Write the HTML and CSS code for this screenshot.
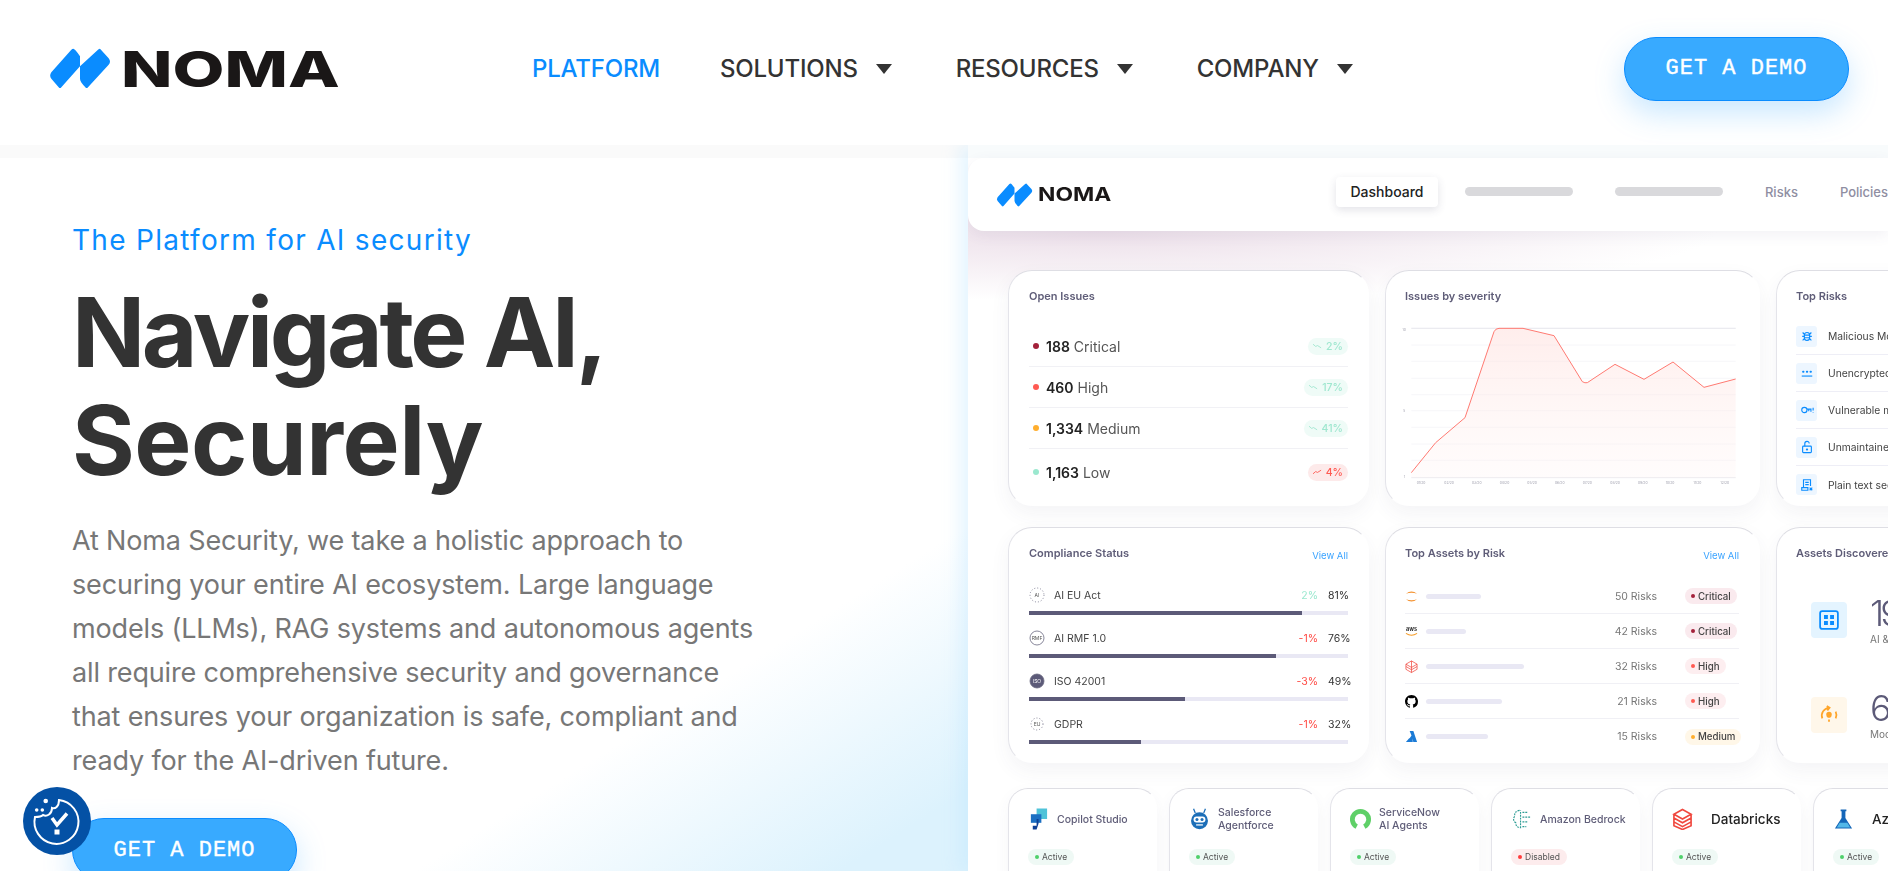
FILE: index.html
```html
<!DOCTYPE html>
<html lang="en">
<head>
  <meta charset="UTF-8">
  <title>Noma Security - The Platform for AI security</title>
  <link rel="stylesheet" href="styles.css">
</head>
<body>

  <header class="site-header">
    <a class="logo" href="#">
      <svg class="logo-mark" viewBox="55 58 186 122"><path d="M128 60Q132 60 148 82V112L92 175Q88 180 84 175L62 150Q55 140 62 130L122 63Q125 60 128 60Z"/><path d="M208 60L234 88Q242 98 234 108L172 175Q168 180 164 175Q148 160 148 150V112L202 63Q205 60 208 60Z"/></svg>
      <span class="logo-text">NOMA</span>
    </a>
    <nav class="main-nav">
      <a class="nav-link active" href="#">PLATFORM</a>
      <a class="nav-link has-arrow" href="#">SOLUTIONS</a>
      <a class="nav-link has-arrow" href="#">RESOURCES</a>
      <a class="nav-link has-arrow" href="#">COMPANY</a>
    </nav>
    <a class="btn-demo header-btn" href="#">GET A DEMO</a>
  </header>

  <section class="hero">
    <div class="hero-copy">
      <p class="eyebrow">The Platform for AI security</p>
      <h1>Navigate AI,<br><span class="second-line">Securely</span></h1>
      <p class="lead">At Noma Security, we take a holistic approach to securing your entire AI ecosystem. Large language models (LLMs), RAG systems and autonomous agents all require comprehensive security and governance that ensures your organization is safe, compliant and ready for the AI-driven future.</p>
      <a class="btn-demo" href="#">GET A DEMO</a>
    </div>

    <div class="dash">
      <div class="dash-bar">
        <svg class="dash-mark" viewBox="55 58 186 122"><path d="M128 60Q132 60 148 82V112L92 175Q88 180 84 175L62 150Q55 140 62 130L122 63Q125 60 128 60Z"/><path d="M208 60L234 88Q242 98 234 108L172 175Q168 180 164 175Q148 160 148 150V112L202 63Q205 60 208 60Z"/></svg>
        <span class="dash-logo">NOMA</span>
        <span class="dash-tab">Dashboard</span>
        <span class="dash-pill first"></span>
        <span class="dash-pill"></span>
        <span class="dash-item first">Risks</span>
        <span class="dash-item">Policies</span>
      </div>

      <div class="card-row row-one">
        <div class="card col-a">
          <h3>Open Issues</h3>
          <ul class="issues">
            <li><i class="dot critical"></i><b>188</b> Critical<span class="trend"><svg viewBox="0 0 10 6"><path d="M0 1L3 3.5L5 2.5L9 5"/></svg>2%</span></li>
            <li><i class="dot high"></i><b>460</b> High<span class="trend"><svg viewBox="0 0 10 6"><path d="M0 1L3 3.5L5 2.5L9 5"/></svg>17%</span></li>
            <li><i class="dot medium"></i><b>1,334</b> Medium<span class="trend"><svg viewBox="0 0 10 6"><path d="M0 1L3 3.5L5 2.5L9 5"/></svg>41%</span></li>
            <li><i class="dot low"></i><b>1,163</b> Low<span class="trend up"><svg viewBox="0 0 10 6"><path d="M0 5L3 2.5L5 3.5L9 1"/></svg>4%</span></li>
          </ul>
        </div>

        <div class="card col-b">
          <h3>Issues by severity</h3>
          <svg class="chart" viewBox="60 195 1020 495">
            <defs>
              <linearGradient id="area" x1="0" y1="0" x2="0" y2="1">
                <stop offset="0" stop-color="#ffdcd9" stop-opacity=".5"/>
                <stop offset="1" stop-color="#fff3f2" stop-opacity=".25"/>
              </linearGradient>
            </defs>
            <g class="grid">
              <path d="M97 205H1070M97 255H1070M97 304H1070M97 355H1070M97 404H1070M97 452H1070M97 502H1070M97 552H1070M97 601H1070"/>
              <path class="base" d="M97 205H1070M97 653H1070"/>
            </g>
            <path fill="url(#area)" d="M97 638L170 548L258 473L345 215Q350 205 360 205H432L525 227L610 365Q618 370 625 368L708 313L795 358L882 306L975 382L1070 357V653H97Z"/>
            <path class="line" d="M97 638L170 548L258 473L345 215Q350 205 360 205H432L525 227L610 365Q618 370 625 368L708 313L795 358L882 306L975 382L1070 357"/>
            <g class="ticks">
              <text x="70" y="212">10</text><text x="73" y="455">5</text><text x="74" y="653">1</text>
              <text x="113" y="672">01/20</text><text x="196" y="672">02/20</text><text x="279" y="672">03/20</text><text x="362" y="672">04/20</text><text x="445" y="672">05/20</text><text x="528" y="672">06/20</text><text x="611" y="672">07/20</text><text x="694" y="672">08/20</text><text x="777" y="672">09/20</text><text x="860" y="672">10/20</text><text x="943" y="672">11/20</text><text x="1024" y="672">12/20</text>
            </g>
          </svg>
        </div>

        <div class="card col-c">
          <h3>Top Risks</h3>
          <ul class="risks">
            <li><span class="tile"><svg viewBox="0 0 16 16"><rect x="5" y="4" width="6" height="9" rx="3"/><path d="M5 7H11M5 10H11M3 4L5 6M13 4L11 6M3 13L5 11M13 13L11 11M2.500 8.500H5M11 8.500H13.500"/></svg></span>Malicious Models</li>
            <li><span class="tile"><svg viewBox="0 0 16 16"><path d="M2 11.500H14"/><path class="fat" d="M3.500 6.500H4M7.800 6.500H8.300M12 6.500H12.500"/></svg></span>Unencrypted data</li>
            <li><span class="tile"><svg viewBox="0 0 16 16"><circle cx="5" cy="8" r="3"/><path d="M8 7H12.500V10M10 7V9.500M15 5.500V8.500M15 10.500V11"/></svg></span>Vulnerable models</li>
            <li><span class="tile"><svg viewBox="0 0 16 16"><rect x="3" y="7" width="10" height="7.500" rx="1"/><path d="M5.500 7V4A2.500 2.500 0 0 1 10.500 4"/><path class="fat" d="M7.800 10.800H8.200"/></svg></span>Unmaintained code</li>
            <li><span class="tile"><svg viewBox="0 0 16 16"><path d="M4 11V2H12V9M6 5H10M6 7.500H10M2 11H9V14H2ZM11 11L14 14M14 11L11 14"/></svg></span>Plain text secrets</li>
          </ul>
        </div>
      </div>

      <div class="card-row row-two">
        <div class="card col-a">
          <div class="card-head"><h3>Compliance Status</h3><a href="#">View All</a></div>
          <ul class="compliance">
            <li>
              <div class="comp-line"><svg class="comp-icon" viewBox="0 0 16 16"><circle class="dashed" cx="8" cy="8" r="7"/><text x="8" y="10">AI</text></svg><span class="comp-name">AI EU Act</span><span class="delta good">2%</span><span class="pct">81%</span></div>
              <div class="bar"><div class="bar-fill" style="width: 85.6%"></div></div>
            </li>
            <li>
              <div class="comp-line"><svg class="comp-icon" viewBox="0 0 16 16"><circle cx="8" cy="8" r="7"/><text x="8" y="10">RMF</text></svg><span class="comp-name">AI RMF 1.0</span><span class="delta bad">-1%</span><span class="pct">76%</span></div>
              <div class="bar"><div class="bar-fill" style="width: 77.5%"></div></div>
            </li>
            <li>
              <div class="comp-line"><svg class="comp-icon" viewBox="0 0 16 16"><circle class="solid" cx="8" cy="8" r="7"/><text class="light" x="8" y="10">ISO</text></svg><span class="comp-name">ISO 42001</span><span class="delta bad">-3%</span><span class="pct">49%</span></div>
              <div class="bar"><div class="bar-fill" style="width: 49%"></div></div>
            </li>
            <li>
              <div class="comp-line"><svg class="comp-icon" viewBox="0 0 16 16"><circle class="dashed" cx="8" cy="8" r="6"/><text x="8" y="10">EU</text></svg><span class="comp-name">GDPR</span><span class="delta bad">-1%</span><span class="pct">32%</span></div>
              <div class="bar"><div class="bar-fill" style="width: 35%"></div></div>
            </li>
          </ul>
        </div>

        <div class="card col-b">
          <div class="card-head"><h3>Top Assets by Risk</h3><a href="#">View All</a></div>
          <ul class="assets">
            <li><svg class="asset-icon" viewBox="0 0 14 16"><path class="jup" d="M1 5Q7 0 13 5Q7 3 1 5ZM1 11Q7 16 13 11Q7 13 1 11Z"/></svg><span class="ghost" style="width: 55px"></span><span class="risk-count">50 Risks</span><span class="sev-col"><span class="sev sev-critical"><i class="dot critical"></i>Critical</span></span></li>
            <li><svg class="asset-icon" viewBox="0 0 14 16"><text class="aws" x="7" y="8">aws</text><path class="smile" d="M1 10Q7 14 13 10"/></svg><span class="ghost" style="width: 40px"></span><span class="risk-count">42 Risks</span><span class="sev-col"><span class="sev sev-critical"><i class="dot critical"></i>Critical</span></span></li>
            <li><svg class="asset-icon" viewBox="0 0 14 16"><path class="stack" d="M7 2L13 5.500V11L7 14.500L1 11V5.500ZM1 5.500L7 9L13 5.500M1 8L7 11.500L13 8M7 2V14.500"/></svg><span class="ghost" style="width: 98px"></span><span class="risk-count">32 Risks</span><span class="sev-col"><span class="sev sev-high"><i class="dot high"></i>High</span></span></li>
            <li><svg class="asset-icon" viewBox="0 0 16 16"><path d="M8 0C3.58 0 0 3.58 0 8c0 3.54 2.29 6.53 5.47 7.59.4.07.55-.17.55-.38 0-.19-.01-.82-.01-1.49-2.01.37-2.53-.49-2.69-.94-.09-.23-.48-.94-.82-1.13-.28-.15-.68-.52-.01-.53.63-.01 1.08.58 1.23.82.72 1.21 1.87.87 2.33.66.07-.52.28-.87.51-1.07-1.78-.2-3.64-.89-3.64-3.95 0-.87.31-1.59.82-2.15-.08-.2-.36-1.02.08-2.12 0 0 .67-.21 2.2.82.64-.18 1.32-.27 2-.27.68 0 1.36.09 2 .27 1.53-1.04 2.2-.82 2.2-.82.44 1.1.16 1.92.08 2.12.51.56.82 1.27.82 2.15 0 3.07-1.87 3.75-3.65 3.95.29.25.54.73.54 1.48 0 1.07-.01 1.93-.01 2.2 0 .21.15.46.55.38A8.013 8.013 0 0016 8c0-4.42-3.58-8-8-8z"/></svg><span class="ghost" style="width: 76px"></span><span class="risk-count">21 Risks</span><span class="sev-col"><span class="sev sev-high"><i class="dot high"></i>High</span></span></li>
            <li><svg class="asset-icon" viewBox="0 0 14 16"><path class="azure" d="M5 2H9L13 14H9L7.500 10H5L7 7ZM4.500 10H7.500L8.500 14H1Z"/></svg><span class="ghost" style="width: 62px"></span><span class="risk-count">15 Risks</span><span class="sev-col"><span class="sev sev-medium"><i class="dot medium"></i>Medium</span></span></li>
          </ul>
        </div>

        <div class="card col-c">
          <h3>Assets Discovered</h3>
          <div class="found first">
            <span class="found-tile blue"><svg viewBox="0 0 18 18"><rect x="1" y="1" width="16" height="16" rx="2"/><path class="squares" d="M4.500 4.500H8V8H4.500ZM10 4.500H13.500V8H10ZM4.500 10H8V13.500H4.500ZM10 10H13.500V13.500H10Z"/></svg></span>
            <div><div class="found-num">19</div><div class="found-sub">AI &amp; ML</div></div>
          </div>
          <div class="found">
            <span class="found-tile amber"><svg viewBox="0 0 18 18"><path d="M3 12A7 7 0 0 1 9 2.500M15 6A7 7 0 0 1 15 12M7 1L9.500 2.500L7.500 5"/><path class="bulb" d="M6.500 8.500A2.500 2.500 0 0 1 11.500 8.500Q11.500 10.500 10 11.500H8Q6.500 10.500 6.500 8.500ZM8.200 13H9.800V15H8.200Z"/></svg></span>
            <div><div class="found-num">64</div><div class="found-sub">Models</div></div>
          </div>
        </div>
      </div>

      <div class="card-row row-three">
        <div class="agent">
          <div class="agent-head"><svg class="agent-icon" viewBox="0 0 22 22"><path fill="#4fc3d9" d="M9 0H20V11H9Z"/><path fill="#1b6fc2" d="M3 6H14V15H3Z"/><path fill="#0d3f94" d="M0 11H9V18H5V22H9L11 16V11Z"/></svg><span>Copilot Studio</span></div>
          <span class="status on"><i></i>Active</span>
        </div>
        <div class="agent">
          <div class="agent-head"><svg class="agent-icon" viewBox="0 0 22 26"><path d="M6 6L4 1M16 6L18 1" stroke="#1d6fb8" stroke-width="1.500"/><circle cx="11" cy="15" r="10" fill="#1d6fb8"/><rect x="4" y="10" width="14" height="7" rx="3.500" fill="#fff"/><circle cx="8" cy="13.500" r="1.800" fill="#1d6fb8"/><circle cx="14" cy="13.500" r="1.800" fill="#1d6fb8"/><path d="M7 20H15" stroke="#fff" stroke-width="1.500"/></svg><span>Salesforce<br>Agentforce</span></div>
          <span class="status on"><i></i>Active</span>
        </div>
        <div class="agent">
          <div class="agent-head"><svg class="agent-icon" viewBox="0 0 22 22"><path fill="none" stroke="#5fd068" stroke-width="5" d="M7 19A8.500 8.500 0 1 1 15 19"/></svg><span>ServiceNow<br>AI Agents</span></div>
          <span class="status on"><i></i>Active</span>
        </div>
        <div class="agent">
          <div class="agent-head"><svg class="agent-icon" viewBox="0 0 22 22"><g fill="none" stroke="#2c9c94" stroke-width="1.200" stroke-dasharray="2 1"><path d="M9 2Q3 3 4 8Q1 12 5 15Q5 20 10 20V2M12 4H18M12 9H20M12 14H17M12 19H16"/></g></svg><span>Amazon Bedrock</span></div>
          <span class="status off"><i></i>Disabled</span>
        </div>
        <div class="agent lift">
          <div class="agent-head big"><svg class="agent-icon" viewBox="0 0 22 22"><path fill="none" stroke="#f0483e" stroke-width="1.700" d="M11 1L20 6L11 11L2 6ZM2 10L11 15L20 10M2 14L11 19L20 14M2 6V18L11 22L20 18V6"/></svg><span>Databricks</span></div>
          <span class="status on"><i></i>Active</span>
        </div>
        <div class="agent lift">
          <div class="agent-head big"><svg class="agent-icon" viewBox="0 0 22 22"><path fill="#1466b8" d="M8 1H14V3H13V10L20 21H2L9 10V3H8Z"/><path fill="#52b7e8" d="M7 15H15L18 20H4Z"/></svg><span>Azure AI Foundry</span></div>
          <span class="status on"><i></i>Active</span>
        </div>
      </div>
    </div>
  </section>

  <!-- cookie settings badge sits over the page -->
  <button class="cookie-badge" aria-label="Cookie settings">
    <svg viewBox="0 0 68 68">
      <path class="cookie" d="M12 30A22 22 0 1 0 36 13C36 20 32 22 29 21C29 27 24 30 20 28C18 30 15 30 12 30Z"/>
      <circle cx="22.700" cy="14" r="2.300"/><circle cx="19.300" cy="23" r="1.800"/><circle cx="13.700" cy="23" r="1.800"/>
      <path class="check" d="M29 31L34 38L44 26.500"/>
      <rect x="31.500" y="42.500" width="5" height="5"/>
    </svg>
  </button>

</body>
</html>
```

FILE: styles.css
```css
* {
  box-sizing: border-box;
}

html, body {
  height: 871px;
  overflow: hidden;
}

body {
  margin: 0;
  font-family: "Inter", "Noto Sans", sans-serif;
  color: #333;
  background: #fff;
}

a {
  color: inherit;
  text-decoration: none;
}

ul {
  list-style: none;
  margin: 0;
  padding: 0;
}

/* header */
.site-header {
  display: flex;
  align-items: center;
  height: 145px;
  padding: 0 39px 8px 49px;
  background: #fff;
}

.logo {
  display: flex;
  align-items: center;
  width: 288px;
}

.logo-mark {
  width: 62px;
  height: 41px;
  fill: #0a8cff;
  flex: none;
}

.logo-text {
  margin-left: 10px;
  font-size: 50px;
  line-height: 50px;
  font-weight: 800;
  color: #1a1717;
  transform: scaleX(1.345);
  transform-origin: left center;
}

.main-nav {
  display: flex;
  align-items: center;
  margin-left: 195px;
}

.nav-link {
  font-size: 24px;
  font-weight: 500;
  letter-spacing: -0.2px;
  color: #333;
  margin-right: 64px;
}

.nav-link.active {
  color: #0a8cff;
  margin-right: 60px;
}

.nav-link.has-arrow::after {
  content: "";
  display: inline-block;
  margin-left: 18px;
  vertical-align: 3px;
  border-left: 8px solid transparent;
  border-right: 8px solid transparent;
  border-top: 10px solid #333;
}

.btn-demo {
  display: flex;
  align-items: center;
  justify-content: center;
  width: 225px;
  height: 64px;
  border: 1px solid #0a8cff;
  border-radius: 32px;
  background: #38aaff;
  box-shadow: 0 12px 30px rgba(56, 170, 255, 0.28);
  color: #fff;
  font-family: "Liberation Mono", monospace;
  font-size: 22px;
  letter-spacing: 1px;
  -webkit-text-stroke: 0.4px #fff;
}

.header-btn {
  margin-left: auto;
}

/* hero */
.hero {
  display: flex;
  height: 726px;
  overflow: hidden;
}

.hero-copy {
  width: 968px;
  flex: none;
  padding: 77px 0 0 72px;
  background:
    linear-gradient(#fafafa 0, #fafafa 13px, rgba(255, 255, 255, 0) 13px),
    linear-gradient(148deg, #fff 74%, #dcf2fd 94%);
}

.eyebrow {
  margin: 0 0 20px;
  font-size: 28px;
  line-height: 36px;
  letter-spacing: 1.3px;
  color: #0a8cff;
}

h1 {
  margin: 0 0 25px;
  font-size: 96px;
  line-height: 108px;
  font-weight: 700;
  letter-spacing: -3.3px;
  color: #333;
}

.second-line {
  letter-spacing: -0.5px;
}

.lead {
  width: 700px;
  margin: 0 0 35px;
  font-size: 27px;
  line-height: 44px;
  letter-spacing: -0.15px;
  color: #777;
}

/* dashboard picture */
.dash {
  flex: 1;
  min-width: 0;
  padding-top: 13px;
  overflow: hidden;
  background:
    radial-gradient(620px 70px at 130px 86px, #ecdfe9 0%, rgba(236, 223, 233, 0) 100%),
    linear-gradient(#f8fbfc 0, #f8fbfc 13px, #fff 13px);
  box-shadow: -8px 0 16px rgba(190, 230, 255, 0.4);
}

.dash-bar {
  display: flex;
  align-items: center;
  height: 73px;
  padding-left: 28px;
  background: #fff;
  border-radius: 16px 0 0 16px;
  box-shadow: 0 4px 14px rgba(90, 80, 130, 0.08);
  white-space: nowrap;
}

.dash-mark {
  width: 37px;
  height: 24px;
  fill: #0a8cff;
  flex: none;
}

.dash-logo {
  margin-left: 5px;
  width: 75px;
  font-size: 19px;
  font-weight: 700;
  color: #1a1717;
  transform: scaleX(1.2);
  transform-origin: left center;
}

.dash-tab {
  display: flex;
  align-items: center;
  justify-content: center;
  width: 102px;
  height: 30px;
  margin: -6px 0 0 223px;
  border-radius: 4px;
  background: #fff;
  box-shadow: 0 3px 9px rgba(60, 60, 90, 0.14);
  font-size: 14px;
  font-weight: 500;
  color: #222;
}

.dash-pill {
  width: 108px;
  height: 9px;
  margin: -6px 0 0 42px;
  border-radius: 5px;
  background: #d9d9dc;
}

.dash-pill.first {
  margin-left: 27px;
}

.dash-item {
  margin: -6px 0 0 42px;
  font-size: 13px;
  font-weight: 500;
  color: #8f8ea2;
}

.card-row {
  display: flex;
  gap: 16px;
  padding-left: 40px;
  filter: blur(0.3px);
}

.row-one {
  margin-top: 39px;
}

.row-two {
  margin-top: 21px;
}

.row-three {
  gap: 12px;
  margin-top: 25px;
}

.card {
  flex: none;
  height: 236px;
  padding: 18px 20px 0;
  border: 1px solid;
  border-color: #dedee4 #fff #fff #e4e4ea;
  border-radius: 24px;
  background: #fff;
  box-shadow: 0 8px 20px rgba(70, 70, 110, 0.06);
}

.col-a {
  width: 361px;
}

.col-b {
  width: 375px;
  padding-left: 19px;
}

.col-c {
  width: 360px;
  padding-left: 19px;
}

.card h3 {
  margin: 0;
  font-size: 11px;
  line-height: 15px;
  font-weight: 600;
  color: #5f5d78;
  white-space: nowrap;
}

.card-head {
  display: flex;
  justify-content: space-between;
}

.card-head a {
  font-size: 9.5px;
  line-height: 20px;
  color: #3aa3ff;
}

/* open issues */
.issues {
  margin-top: 22px;
}

.issues li {
  display: flex;
  align-items: center;
  height: 41px;
  font-size: 14px;
  color: #555;
  border-bottom: 1px solid #f1f1f5;
}

.issues li:last-child {
  height: 46px;
  border-bottom: 0;
}

.issues b {
  margin-right: 4px;
  font-weight: 600;
  color: #222;
}

.dot {
  display: inline-block;
  flex: none;
  width: 6px;
  height: 6px;
  border-radius: 50%;
}

.issues .dot {
  margin: 0 7px 0 4px;
}

.critical { background: #a3213a; }
.high { background: #ff5a52; }
.medium { background: #ffae2e; }
.low { background: #9be8cf; }

.trend {
  display: flex;
  align-items: center;
  gap: 4px;
  height: 17px;
  margin-left: auto;
  padding: 0 5px;
  border-radius: 9px;
  background: #effbf7;
  font-size: 10.5px;
  font-weight: 500;
  color: #9fe7cf;
}

.trend svg {
  width: 9px;
  height: 6px;
  fill: none;
  stroke: currentColor;
}

.trend.up {
  background: #fdeaea;
  color: #ff5a52;
}

/* chart */
.chart {
  display: block;
  width: 340px;
  height: 165px;
  margin: 21px 0 0 -6px;
}

.grid path {
  fill: none;
  stroke: #f2f2f6;
  stroke-width: 2;
}

.grid path.base {
  stroke: #e4e4ea;
  stroke-width: 2.5;
}

.line {
  fill: none;
  stroke: #ff7a72;
  stroke-width: 3;
}

.ticks text {
  font-size: 10px;
  fill: #a0a0ae;
}

/* top risks */
.risks {
  margin-top: 14px;
}

.risks li {
  display: flex;
  align-items: center;
  gap: 11px;
  height: 37px;
  border-bottom: 1px solid #eeeef6;
  font-size: 10.3px;
  color: #444;
  white-space: nowrap;
}

.risks li:last-child {
  border-bottom: 0;
}

.tile {
  display: flex;
  align-items: center;
  justify-content: center;
  width: 21px;
  height: 21px;
  border-radius: 3px;
  background: #edf6ff;
}

.tile svg {
  width: 14px;
  height: 14px;
  fill: none;
  stroke: #0a8cff;
  stroke-width: 1.3;
}

.tile .fat {
  stroke-width: 2.2;
  stroke-linecap: round;
}

/* compliance */
.compliance {
  margin-top: 21px;
}

.compliance li {
  margin-top: 15px;
}

.compliance li:first-child {
  margin-top: 0;
}

.comp-line {
  display: flex;
  align-items: center;
  height: 16px;
  margin-bottom: 8px;
  font-size: 10.5px;
  color: #444;
}

.comp-icon {
  width: 16px;
  height: 16px;
  margin-right: 9px;
  flex: none;
}

.comp-icon circle {
  fill: #fff;
  stroke: #6a6880;
  stroke-width: 0.8;
}

.comp-icon .dashed {
  stroke-dasharray: 1 2;
}

.comp-icon .solid {
  fill: #5c5a78;
}

.comp-icon text {
  font-size: 5px;
  text-anchor: middle;
  fill: #555;
}

.comp-icon text.light {
  fill: #fff;
}

.comp-name {
  flex: 1;
}

.delta {
  font-size: 10.5px;
  margin-right: 10px;
}

.delta.good { color: #9be8cf; }
.delta.bad { color: #ff4b45; }

.pct {
  width: 20px;
  font-size: 10.5px;
  color: #333;
  text-align: right;
}

.bar {
  height: 4px;
  background: #e9e8f4;
}

.bar-fill {
  height: 4px;
  background: #5c5a78;
}

/* top assets */
.assets {
  margin-top: 13px;
}

.assets li {
  display: flex;
  align-items: center;
  height: 35px;
  border-bottom: 1px solid #f0f0f5;
}

.assets li:last-child {
  border-bottom: 0;
}

.asset-icon {
  flex: none;
  width: 13px;
  height: 15px;
  margin-right: 8px;
}

.jup { fill: #f4902c; }
.stack { fill: none; stroke: #f0483e; stroke-width: 0.8; }
.azure { fill: #1c7bd6; }
.aws { font-size: 6px; font-weight: 700; text-anchor: middle; fill: #333; }
.smile { fill: none; stroke: #f59a23; stroke-width: 1.2; }

.ghost {
  height: 5px;
  border-radius: 3px;
  background: #e9e8f4;
}

.risk-count {
  margin-left: auto;
  font-size: 10.5px;
  color: #777;
}

.sev-col {
  display: flex;
  flex: none;
  width: 54px;
  margin-left: 28px;
}

.sev {
  display: flex;
  align-items: center;
  gap: 3px;
  height: 16px;
  padding: 0 6px;
  border-radius: 8px;
  font-size: 9.7px;
  font-weight: 500;
  color: #444;
}

.sev .dot {
  width: 4px;
  height: 4px;
}

.sev-critical { background: #faeaee; }
.sev-high { background: #fdeef0; }
.sev-medium { background: #fff7e8; }

/* assets discovered */
.found {
  display: flex;
  gap: 23px;
  margin: 52px 0 0 15px;
}

.found.first {
  margin-top: 41px;
}

.found-tile {
  display: flex;
  align-items: center;
  justify-content: center;
  width: 36px;
  height: 36px;
  flex: none;
  border-radius: 4px;
}

.found-tile svg {
  width: 20px;
  height: 20px;
  fill: none;
  stroke-width: 1.6;
}

.found-tile.blue { background: #e4f4ff; }
.found-tile.blue svg { stroke: #0a8cff; }
.found-tile.amber { background: #fff7ea; }
.found-tile.amber svg { stroke: #ffa52a; }

.found-tile .squares {
  fill: #0a8cff;
  stroke: none;
}

.found-tile .bulb {
  fill: #ffa52a;
  stroke: none;
}

.found-num {
  margin-top: -9px;
  font-size: 36px;
  line-height: 40px;
  font-weight: 300;
  letter-spacing: -4px;
  color: #5c5a78;
}

.found-sub {
  font-size: 10px;
  line-height: 12px;
  color: #777;
}

/* agent cards */
.agent {
  flex: none;
  width: 149px;
  height: 120px;
  padding: 15px 19px 0;
  border: 1px solid;
  border-color: #dedee4 #fff #fff #e4e4ea;
  border-radius: 20px;
  background: #fff;
  box-shadow: 0 6px 16px rgba(70, 70, 110, 0.05);
}

.agent-head {
  display: flex;
  align-items: center;
  gap: 8px;
  height: 30px;
  margin-bottom: 9px;
  font-size: 10.5px;
  line-height: 13px;
  font-weight: 500;
  color: #5f5d78;
  white-space: nowrap;
}

.agent-head.big {
  gap: 18px;
  font-size: 13.5px;
  color: #222;
}

.agent-icon {
  flex: none;
  width: 21px;
  height: 22px;
}

.status {
  display: inline-flex;
  align-items: center;
  gap: 3px;
  height: 16px;
  padding: 0 7px;
  border-radius: 8px;
  font-size: 8.5px;
}

.lift .status {
  margin-top: -2px;
}

.status i {
  width: 4px;
  height: 4px;
  border-radius: 50%;
}

.status.on { background: #eff9f5; color: #555; }
.status.on i { background: #4fd06a; }
.status.off { background: #fdeced; color: #555; }
.status.off i { background: #ff3b3b; }

/* cookie badge */
.cookie-badge {
  position: fixed;
  left: 23px;
  top: 787px;
  width: 68px;
  height: 68px;
  padding: 0;
  border: 0;
  border-radius: 50%;
  background: #0451a5;
}

.cookie-badge svg {
  display: block;
  width: 68px;
  height: 68px;
  fill: #fff;
}

.cookie-badge .cookie {
  fill: none;
  stroke: #fff;
  stroke-width: 2;
}

.cookie-badge .check {
  fill: none;
  stroke: #fff;
  stroke-width: 3.5;
}
```
